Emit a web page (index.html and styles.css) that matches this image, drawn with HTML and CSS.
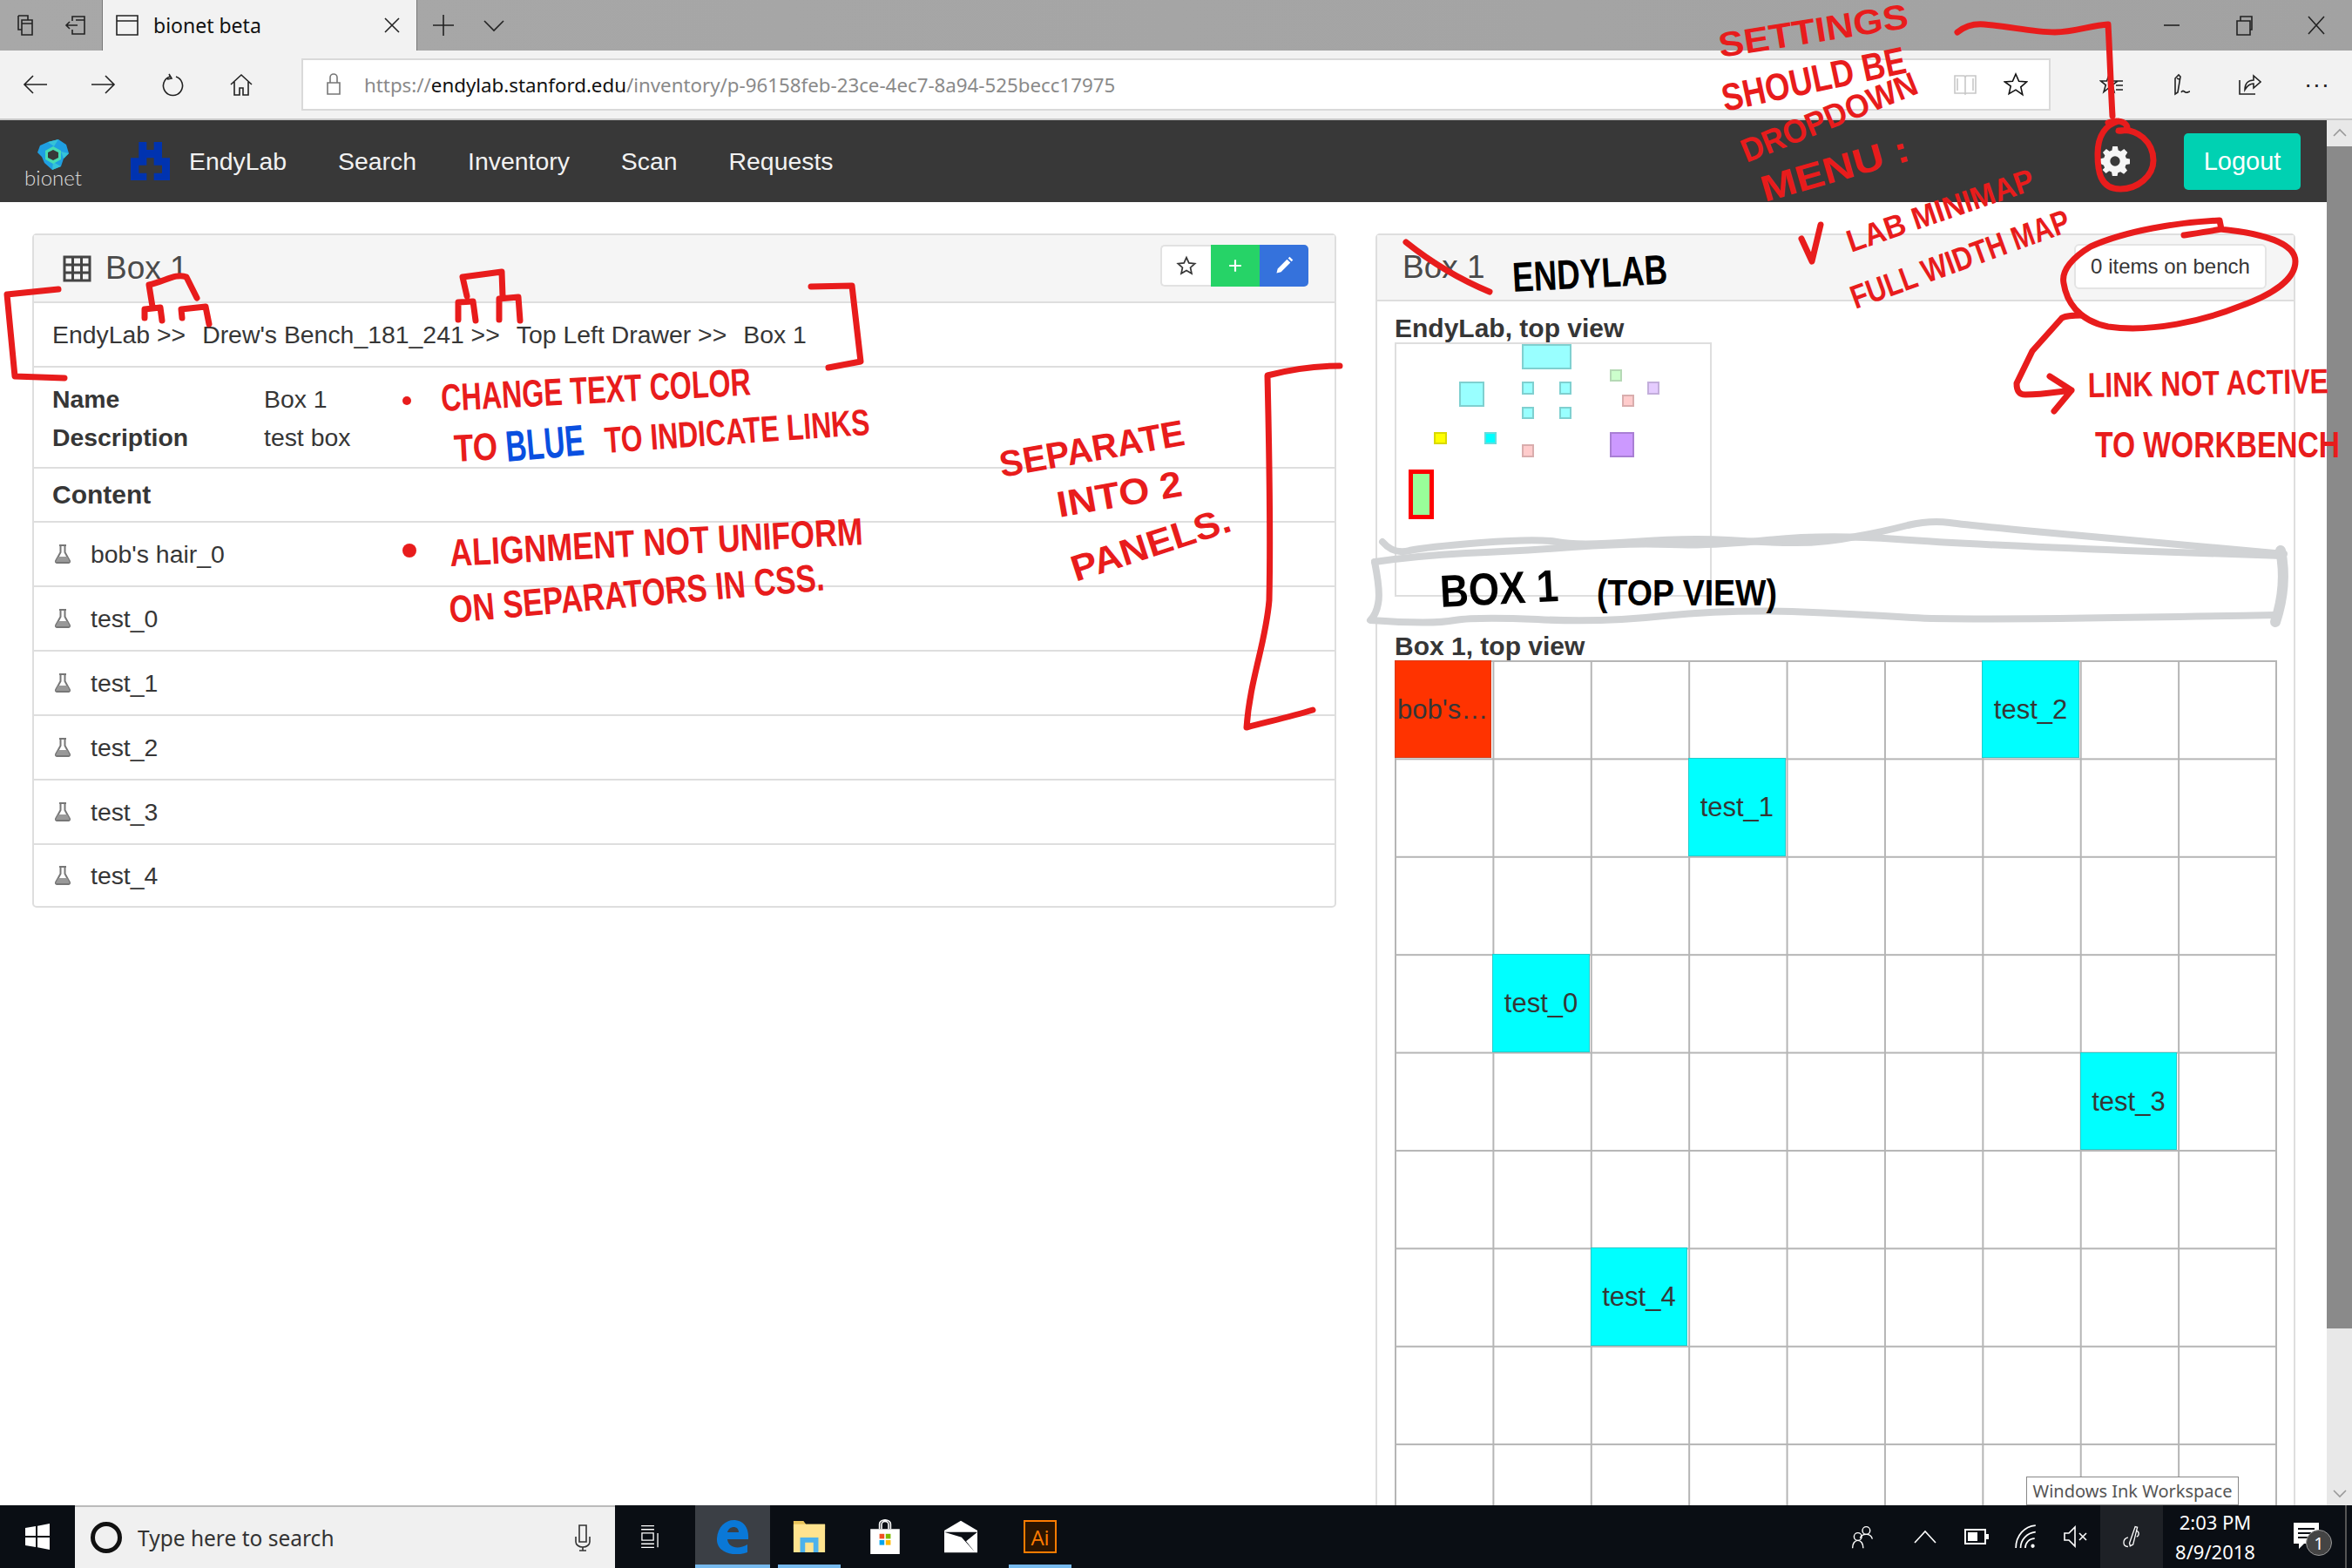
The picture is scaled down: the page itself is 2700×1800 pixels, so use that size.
FILE: index.html
```html
<!DOCTYPE html>
<html lang="en">
<head>
  <meta charset="UTF-8" />
  <title>bionet beta</title>
  <link rel="stylesheet" href="styles.css">
</head>
<body>
<div class="screen">

  <!-- browser tabs -->
  <div class="tabbar">
    <div class="chrome-btn">
      <svg class="ico" viewBox="0 0 28 28"><path d="M6 3h11v5M6 3v16h4M10 8h12v17H10zM10 12h12"/></svg>
    </div>
    <div class="chrome-btn">
      <svg class="ico" viewBox="0 0 28 28"><path d="M10 9V4h14v20H10v-5M3 14h13M7 10l-4 4 4 4M14 8h10"/></svg>
    </div>
    <div class="tab">
      <svg class="ico" viewBox="0 0 28 28"><path d="M2 3h24v22H2zM2 9h24"/></svg>
      <span class="tab-title">bionet beta</span>
      <svg class="ico ico-small" viewBox="0 0 20 20"><path d="M2 2l16 16M18 2L2 18"/></svg>
    </div>
    <div class="tab-plus">
      <svg class="ico" viewBox="0 0 28 28"><path d="M14 2v24M2 14h24"/></svg>
    </div>
    <div class="tab-more">
      <svg class="ico" viewBox="0 0 28 28"><path d="M3 9l11 11L25 9"/></svg>
    </div>
    <div class="window-btns">
      <div class="window-btn"><svg class="ico" viewBox="0 0 28 28"><path d="M5 14h18"/></svg></div>
      <div class="window-btn"><svg class="ico" viewBox="0 0 28 28"><path d="M6 9h15v16H6zM10 9V4h13v15h-2"/></svg></div>
      <div class="window-btn"><svg class="ico" viewBox="0 0 28 28"><path d="M5 4l18 20M23 4L5 24"/></svg></div>
    </div>
  </div>

  <!-- address bar -->
  <div class="toolbar">
    <div class="tool-btn"><svg class="ico" viewBox="0 0 28 28"><path d="M28 14H2M12 4L2 14l10 10"/></svg></div>
    <div class="tool-btn"><svg class="ico" viewBox="0 0 28 28"><path d="M0 14h26M16 4l10 10-10 10"/></svg></div>
    <div class="tool-btn"><svg class="ico" viewBox="0 0 28 28"><path d="M10 2l3 5-5 1M11 5a11 11 0 1 0 7 0"/></svg></div>
    <div class="tool-btn"><svg class="ico" viewBox="0 0 28 28"><path d="M2 14L14 3l12 11M6 11v15h6v-8h4v8h6V11"/></svg></div>
    <div class="address">
      <svg class="ico lock" viewBox="0 0 24 28"><path d="M5 12h14v13H5zM8 12V6a4 4 0 0 1 8 0v6"/></svg>
      <span class="url">https://<b>endylab.stanford.edu</b>/inventory/p-96158feb-23ce-4ec7-8a94-525becc17975</span>
      <div class="address-end">
        <svg class="ico book" viewBox="0 0 28 28"><path d="M2 4h11l1 2 1-2h11v20H15l-1 1-1-1H2zM14 6v18M5 7v14M23 7v14"/></svg>
        <svg class="ico star" viewBox="0 0 28 28"><path d="M14 2l3.6 8.2 8.9.8-6.7 5.9 2 8.7L14 20.1 6.200 24.600l2-8.700L1.500 11l8.900-.8z"/></svg>
      </div>
    </div>
    <div class="tool-group">
      <div class="tool-btn"><svg class="ico" viewBox="0 0 28 28"><path d="M11 3l2.500 7H21l-6 4.500 2 8-6-4.800L5 22.500l2.300-8L1.500 10H8.500zM17 10h10M19 15h8M19 20h8"/></svg></div>
      <div class="tool-btn"><svg class="ico" viewBox="0 0 28 28"><path d="M8 22V7l4-4 2 2-3 18-3 2zM10 7l3 1M15 23c2-3 3-1 5 0s3-1 5-1"/></svg></div>
      <div class="tool-btn"><svg class="ico" viewBox="0 0 28 28"><path d="M3 9v16h18M9 20c0-7 4-11 10-11V4l8 7-8 7v-5c-4 0-7 2-10 7z"/></svg></div>
      <div class="tool-btn"><span class="dots">...</span></div>
    </div>
  </div>

  <div class="viewport">
    <main class="page">

      <nav class="navbar">
        <div class="brand">
          <svg class="brand-mark" viewBox="0 0 36 36">
            <path fill="#1f9fe2" d="M12 3l12-3 9 6 3 10-6 6-3 9-10 4-9-8-3-7-5-5 3-8z"/>
            <path fill="#35c3d8" d="M12 3l12-3-5 8zM27 31l-10 4 1-9zM30 22l6-6-9-2z"/>
            <path fill="#46dcb4" d="M18 8l9 5v10l-9 5-9-5V13z"/>
            <path fill="#383838" d="M18 12l6 3v6l-6 3-6-3v-6z"/>
          </svg>
          <span class="brand-name">bionet</span>
        </div>
        <svg class="lab-mark" viewBox="450 100 135 132"><path fill="#0033b0" d="M478 100h27v27h25v-27h28v55h27v77h-55v-25h28v-27h-28v-25h-25v25h-27v27h27v25h-55v-77h28z"/></svg>
        <a class="nav-link nav-first">EndyLab</a>
        <a class="nav-link">Search</a>
        <a class="nav-link">Inventory</a>
        <a class="nav-link">Scan</a>
        <a class="nav-link">Requests</a>
        <svg class="gear" viewBox="0 0 24 24"><path fill-rule="evenodd" d="M10 0h4l.6 3.200 2 .8L19.300 2.200l2.800 2.800-1.800 2.700.8 2 3 .6v4l-3.200.6-.8 2 1.800 2.700-2.800 2.800-2.700-1.800-2 .8L13.800 24h-4l-.6-3.200-2-.8-2.600 1.800-2.800-2.800L3.600 17.300l-.8-2L0 14v-4l3-.6.800-2L2.100 4.900l2.800-2.800L7.500 4l2-.8zM12 8a4 4 0 1 0 0 8 4 4 0 0 0 0-8z"/></svg>
        <a class="logout">Logout</a>
      </nav>

      <div class="columns">
        <section class="panel panel-left">
          <div class="panel-head">
            <svg class="table-ico" viewBox="0 0 33 31"><path d="M2 2h29v27H2zM2 11h29M2 20h29M11.500 2v27M21.500 2v27"/></svg>
            <span class="panel-title">Box 1</span>
            <div class="btn-group">
              <div class="btn btn-star"><svg viewBox="0 0 28 28"><path d="M14 3l3.300 7.400 8 .8-6 5.400 1.700 7.900-7-4-7 4 1.700-7.900-6-5.400 8-.8z"/></svg></div>
              <div class="btn btn-add"><svg viewBox="0 0 28 28"><path d="M14 6v16M6 14h16"/></svg></div>
              <div class="btn btn-edit"><svg viewBox="0 0 28 28"><path d="M4 24l1.500-6L18 5.500l4.500 4.500L10 22.500zM19.500 4l2-2 4.500 4.500-2 2z"/></svg></div>
            </div>
          </div>
          <div class="crumbs">
            <span>EndyLab &gt;&gt;</span>
            <span>Drew's Bench_181_241 &gt;&gt;</span>
            <span>Top Left Drawer &gt;&gt;</span>
            <span>Box 1</span>
          </div>
          <div class="props">
            <div class="prop"><strong>Name</strong><span>Box 1</span></div>
            <div class="prop"><strong>Description</strong><span>test box</span></div>
          </div>
          <h5 class="content-head">Content</h5>
          <div class="item"><svg class="flask" viewBox="0 0 20 24"><path d="M6 2h8M7.500 2v8L2 20a1.500 1.500 0 0 0 1.500 2h13a1.500 1.500 0 0 0 1.500-2l-5.500-10V2"/><path class="flask-fill" d="M5 15h10l3 6H2z"/></svg>bob's hair_0</div>
          <div class="item"><svg class="flask" viewBox="0 0 20 24"><path d="M6 2h8M7.500 2v8L2 20a1.500 1.500 0 0 0 1.500 2h13a1.500 1.500 0 0 0 1.500-2l-5.500-10V2"/><path class="flask-fill" d="M5 15h10l3 6H2z"/></svg>test_0</div>
          <div class="item"><svg class="flask" viewBox="0 0 20 24"><path d="M6 2h8M7.500 2v8L2 20a1.500 1.500 0 0 0 1.500 2h13a1.500 1.500 0 0 0 1.500-2l-5.500-10V2"/><path class="flask-fill" d="M5 15h10l3 6H2z"/></svg>test_1</div>
          <div class="item"><svg class="flask" viewBox="0 0 20 24"><path d="M6 2h8M7.500 2v8L2 20a1.500 1.500 0 0 0 1.500 2h13a1.500 1.500 0 0 0 1.500-2l-5.500-10V2"/><path class="flask-fill" d="M5 15h10l3 6H2z"/></svg>test_2</div>
          <div class="item"><svg class="flask" viewBox="0 0 20 24"><path d="M6 2h8M7.500 2v8L2 20a1.500 1.500 0 0 0 1.500 2h13a1.500 1.500 0 0 0 1.500-2l-5.500-10V2"/><path class="flask-fill" d="M5 15h10l3 6H2z"/></svg>test_3</div>
          <div class="item"><svg class="flask" viewBox="0 0 20 24"><path d="M6 2h8M7.500 2v8L2 20a1.500 1.500 0 0 0 1.500 2h13a1.500 1.500 0 0 0 1.500-2l-5.500-10V2"/><path class="flask-fill" d="M5 15h10l3 6H2z"/></svg>test_4</div>
        </section>

        <section class="panel panel-right">
          <div class="panel-head">
            <span class="panel-title">Box 1</span>
            <div class="bench-btn">0 items on bench</div>
          </div>
          <div class="panel-body">
            <h5 class="map-title">EndyLab, top view</h5>
            <div class="minimap">
              <div class="node node-cyan n1"></div>
              <div class="node node-cyan n2"></div>
              <div class="node node-cyan n3"></div>
              <div class="node node-cyan n4"></div>
              <div class="node node-cyan n5"></div>
              <div class="node node-cyan n6"></div>
              <div class="node node-green n7"></div>
              <div class="node node-lilac n8"></div>
              <div class="node node-pink n9"></div>
              <div class="node node-yellow n10"></div>
              <div class="node node-aqua n11"></div>
              <div class="node node-pink n12"></div>
              <div class="node node-purple n13"></div>
              <div class="node node-active n14"></div>
            </div>
            <h5 class="map-title box-title">Box 1, top view</h5>
            <div class="boxgrid">
              <div class="slot slot-red c1 r1">bob's hair_0</div>
              <div class="slot c7 r1">test_2</div>
              <div class="slot c4 r2">test_1</div>
              <div class="slot c2 r4">test_0</div>
              <div class="slot c8 r5">test_3</div>
              <div class="slot c3 r7">test_4</div>
            </div>
          </div>
        </section>
      </div>
    </main>

    <div class="scrollbar">
      <div class="scroll-arrow"><svg class="ico" viewBox="0 0 20 20"><path d="M3 13l7-7 7 7"/></svg></div>
      <div class="scroll-thumb"></div>
      <div class="scroll-track"><svg class="ico" viewBox="0 0 20 20"><path d="M3 7l7 7 7-7"/></svg></div>
    </div>
  </div>

  <!-- windows taskbar -->
  <footer class="taskbar">
    <div class="win-start">
      <svg viewBox="0 0 30 30"><path fill="#fff" d="M1 5l12-2v11H1zM15 2.700L29 0v14H15zM1 16h12v11L1 25zM15 16h14v14l-14-2.700z"/></svg>
    </div>
    <div class="search">
      <span class="cortana"></span>
      <span class="search-text">Type here to search</span>
      <svg class="ico mic" viewBox="0 0 20 32"><path d="M6 2h8v19H6zM2 15v6a8 6 0 0 0 16 0v-6M10 27v4M6 31h8"/></svg>
    </div>
    <div class="task-view">
      <svg class="ico ico-white" viewBox="0 0 30 34"><path d="M3 2h18M3 7h18M4 12h16v10H4zM3 27h18M3 32h18M26 6v0M26 12v20"/></svg>
    </div>
    <div class="task-app task-edge">
      <svg viewBox="0 0 38 40"><path fill="#0a78d7" fill-rule="evenodd" d="M1 22C2 8 12 0 22 1c10 1 16 9 15 22H13c1 10 13 12 23 6v9C20 44 0 38 1 22zM13 15h13C26 7 15 7 13 15z"/></svg>
    </div>
    <div class="task-app task-open">
      <svg viewBox="0 0 38 42"><path fill="#e8c35a" d="M0 2h12l3 4h23v6H0z"/><path fill="#ffe38f" d="M0 6h38v34H0z"/><path fill="#4db2ec" d="M8 22h22v18h-6V28H14v12H8z"/></svg>
    </div>
    <div class="task-app">
      <svg viewBox="0 0 42 50"><path fill="none" stroke="#fff" stroke-width="2" d="M13 14V7a8 6 0 0 1 16 0v7M16 14V8a5 5 0 0 1 10 0v6"/><path fill="#fff" d="M0 14h42v36H0z"/><path fill="#f25022" d="M13 21h7v7h-7z"/><path fill="#7fba00" d="M22 21h7v7h-7z"/><path fill="#00a4ef" d="M13 30h7v7h-7z"/><path fill="#ffb900" d="M22 30h7v7h-7z"/></svg>
    </div>
    <div class="task-app">
      <svg viewBox="0 0 44 42"><path fill="#fff" d="M22 0l22 13v29H0V13z"/><path fill="#0a0e14" d="M0 15h44L29 27l12 15-18-20z"/></svg>
    </div>
    <div class="task-app task-open task-ai"><span class="ai-badge">Ai</span></div>

    <div class="tray">
      <div class="tray-item tray-people"><svg class="ico ico-white" viewBox="0 0 30 32"><circle cx="20" cy="8" r="5"/><path d="M12 18c1-4 4-5 8-5s7 2 8 6"/><circle cx="9" cy="16" r="5"/><path d="M2 31c0-6 3-10 7-10s7 4 7 10"/></svg></div>
      <div class="tray-item tray-caret"><svg class="ico ico-white" viewBox="0 0 28 18"><path d="M2 16L14 3l12 13"/></svg></div>
      <div class="tray-item tray-battery"><svg viewBox="0 0 28 18"><path fill="none" stroke="#fff" stroke-width="2" d="M1 1h23v16H1z"/><path fill="#fff" d="M4 4h11v10H4zM25 6h3v6h-3z"/></svg></div>
      <div class="tray-item tray-wifi"><svg class="ico ico-white" viewBox="0 0 24 26"><path d="M1 25C1 12 10 2 22 1M6 25c0-9 7-16 16-17M11 25c0-5 4-10 10-10"/><circle class="dot" cx="19" cy="23" r="2"/></svg></div>
      <div class="tray-item tray-volume"><svg class="ico ico-white" viewBox="0 0 28 26"><path d="M1 9h5l7-7v22l-7-7H1zM18 9l8 8M26 9l-8 8"/></svg></div>
      <div class="tray-item tray-ink"><svg class="ico ico-white" viewBox="0 0 30 34"><path d="M12 26L20 3l3 1-6 24-4 2zM21 9c5 0 5 7 1 8M10 18c-8 2-8 13 0 13"/></svg></div>
      <div class="clock"><span>2:03 PM</span><span>8/9/2018</span></div>
      <div class="tray-item tray-notify">
        <svg viewBox="0 0 30 32"><path fill="#fff" fill-rule="evenodd" d="M0 0h29v24H12l-6 6v-6H0zM5 6h19v2H5zM5 11h19v2H5zM5 16h19v2H5z"/></svg>
        <span class="notify-badge">1</span>
      </div>
      <div class="show-desktop"></div>
    </div>
  </footer>

  <div class="tooltip">Windows Ink Workspace</div>

  <!-- pen annotations drawn over the screenshot -->
  <svg class="ink" viewBox="0 0 2700 1800">
    <g class="scribble">
      <path d="M1587 622Q1600 637 1618 632Q1636 628 1700 623Q1765 618 1787 622Q1810 627 1875 622Q1939 617 1984 620Q2029 623 2062 623Q2096 623 2130 616Q2163 610 2190 603Q2216 597 2238 600Q2260 603 2335 610Q2410 617 2522 627L2622 636"/>
      <path d="M1578 645Q1627 638 1683 635Q1739 633 1805 628Q1872 623 1917 625Q1962 627 2029 620Q2096 613 2178 619Q2260 625 2440 632L2620 638"/>
      <path d="M1578 645Q1585 680 1582 693Q1580 705 1573 712Q1645 717 1670 712Q1694 708 1765 711Q1837 715 1910 707Q1984 700 2057 702Q2131 705 2195 709Q2260 713 2612 706"/>
      <path class="scribble-end" d="M2618 632q8 40-6 82"/>
    </g>
    <g class="pen pen-red">
      <path d="M67 332L8 338 17 432 74 434"/>
      <path d="M931 329l47-1 10 87-37 7"/>
      <path d="M175 352l-4-25c18-4 32-14 43-9l12 24M186 368l-2-15-18 2v10M209 365l-1-10 28-3 4 20"/>
      <path d="M536 340l-5-22 45-6 1 28M546 368l-3-22-17 1v20M573 367v-24l22-2 2 27"/>
      <path d="M1538 420c-30 0-60 5-83 11 2 90 4 170 2 258-4 50-22 90-26 146 22-6 50-12 76-20"/>
      <path d="M2247 37c10-8 20-10 31-9 28 2 55 9 81 9 22 0 42-8 61-9 2 35 3 70 5 105"/>
      <path d="M2420 141c10-4 20-2 22 5 1 3-6 5-10 4 22-4 40 14 40 34 0 18-18 33-38 33-24 0-26-22-26-40 0-22 10-34 24-38"/>
      <path d="M2507 270C2520 268 2540 265 2550 263L2548 253C2500 255 2440 265 2400 283C2380 295 2366 310 2369 325C2372 345 2385 368 2420 375C2470 382 2530 368 2570 352C2610 338 2635 320 2635 300C2635 280 2600 268 2548 263"/>
      <path d="M2390 362c-10 0-18 0-23 3l-34 38-18 37c0 10 4 13 10 13 18 0 36-3 53-5M2353 432l25 16-20 24"/>
      <path d="M2068 274l12 26 10-42"/>
      <path d="M1614 278c30 24 60 42 96 57"/>
      <circle class="dot" cx="467" cy="460" r="5"/>
      <circle class="dot" cx="470" cy="632" r="8"/>
    </g>
    <g class="hand hand-red">
      <text transform="translate(1975 66) rotate(-9)" font-size="40" textLength="220" lengthAdjust="spacingAndGlyphs">SETTINGS</text>
      <text transform="translate(1980 128) rotate(-12)" font-size="44" textLength="215" lengthAdjust="spacingAndGlyphs">SHOULD BE</text>
      <text transform="translate(2005 187) rotate(-22)" font-size="38" textLength="215" lengthAdjust="spacingAndGlyphs">DROPDOWN</text>
      <text transform="translate(2026 232) rotate(-16)" font-size="42" textLength="175" lengthAdjust="spacingAndGlyphs">MENU :</text>
      <text transform="translate(2125 290) rotate(-19)" font-size="36" textLength="225" lengthAdjust="spacingAndGlyphs">LAB MINIMAP</text>
      <text transform="translate(2130 355) rotate(-20)" font-size="38" textLength="265" lengthAdjust="spacingAndGlyphs">FULL WIDTH MAP</text>
      <text transform="translate(2397 456) rotate(-1) scale(.8 1)" font-size="40">LINK NOT ACTIVE</text>
      <text transform="translate(2405 525) scale(.8 1)" font-size="42">TO WORKBENCH</text>
      <text transform="translate(507 472) rotate(-3)" font-size="44" textLength="356" lengthAdjust="spacingAndGlyphs">CHANGE TEXT COLOR</text>
      <text transform="translate(522 530) rotate(-3)" font-size="44" textLength="50" lengthAdjust="spacingAndGlyphs">TO</text>
      <text class="hand-blue" transform="translate(582 530) rotate(-5)" font-size="50" textLength="90" lengthAdjust="spacingAndGlyphs">BLUE</text>
      <text transform="translate(695 520) rotate(-4)" font-size="42" textLength="305" lengthAdjust="spacingAndGlyphs">TO INDICATE LINKS</text>
      <text transform="translate(517 650) rotate(-3)" font-size="44" textLength="475" lengthAdjust="spacingAndGlyphs">ALIGNMENT NOT UNIFORM</text>
      <text transform="translate(517 715) rotate(-5)" font-size="44" textLength="432" lengthAdjust="spacingAndGlyphs">ON SEPARATORS IN CSS.</text>
      <text transform="translate(1150 548) rotate(-10)" font-size="42" textLength="215" lengthAdjust="spacingAndGlyphs">SEPARATE</text>
      <text transform="translate(1216 594) rotate(-10)" font-size="42" textLength="145" lengthAdjust="spacingAndGlyphs">INTO 2</text>
      <text transform="translate(1235 668) rotate(-18)" font-size="42" textLength="190" lengthAdjust="spacingAndGlyphs">PANELS.</text>
    </g>
    <g class="hand hand-black">
      <text transform="translate(1737 335) rotate(-3)" font-size="48" textLength="178" lengthAdjust="spacingAndGlyphs">ENDYLAB</text>
      <text transform="translate(1654 697) rotate(-3)" font-size="52" textLength="136" lengthAdjust="spacingAndGlyphs">BOX 1</text>
      <text transform="translate(1833 695)" font-size="42" textLength="207" lengthAdjust="spacingAndGlyphs">(TOP VIEW)</text>
    </g>
  </svg>
</div>
</body>
</html>
```

FILE: styles.css
```css
:root {
  --text: #363636;
  --line: #dedede;
  --head-bg: #f5f5f5;
  --chrome: #f2f2f2;
  --red-ink: #e81c1c;
}

* {
  box-sizing: border-box;
}

html, body {
  margin: 0;
  height: 100%;
  overflow: hidden;
}

body {
  font-family: "Liberation Sans", Arial, sans-serif;
  color: var(--text);
  background: #fff;
}

h5 {
  margin: 0;
}

.screen {
  position: relative;
  width: 2700px;
  height: 1800px;
  display: flex;
  flex-direction: column;
  overflow: hidden;
}

.ico {
  width: 28px;
  height: 28px;
  fill: none;
  stroke: #222;
  stroke-width: 1.6;
}

.ico-small {
  width: 20px;
  height: 20px;
}

.ico-white {
  stroke: #fff;
}

/* tabs */
.tabbar {
  height: 58px;
  display: flex;
  background: linear-gradient(90deg, #a8a8a8, #a2a2a2);
  font-family: "Noto Sans", sans-serif;
}

.chrome-btn {
  width: 58px;
  display: flex;
  align-items: center;
  justify-content: center;
}

.tab {
  width: 362px;
  margin-left: 1px;
  display: flex;
  align-items: center;
  padding: 0 18px 0 14px;
  background: var(--chrome);
  border-left: 1px solid #777;
  border-right: 1px solid #777;
}

.tab-title {
  flex: 1;
  margin-left: 16px;
  font-size: 23px;
  color: #111;
}

.tab-plus {
  width: 60px;
  display: flex;
  align-items: center;
  justify-content: center;
}

.tab-more {
  width: 56px;
  display: flex;
  align-items: center;
  justify-content: center;
}

.window-btns {
  margin-left: auto;
  display: flex;
}

.window-btn {
  width: 83px;
  display: flex;
  align-items: center;
  justify-content: center;
}

/* address bar */
.toolbar {
  height: 80px;
  display: flex;
  align-items: center;
  background: var(--chrome);
  border-bottom: 2px solid #c9c9c9;
}

.tool-btn {
  width: 79px;
  display: flex;
  align-items: center;
  justify-content: center;
}

.tool-group {
  margin-left: 30px;
  display: flex;
}

.dots {
  font-size: 28px;
  line-height: 28px;
  letter-spacing: 2px;
  padding-bottom: 12px;
  color: #222;
}

.address {
  width: 2008px;
  height: 60px;
  margin-left: 30px;
  display: flex;
  align-items: center;
  padding-left: 21px;
  background: #fff;
  border: 2px solid #d9d9d9;
}

.lock {
  stroke: #777;
}

.url {
  margin-left: 21px;
  font-family: "Noto Sans", sans-serif;
  font-size: 22.300px;
  color: #8a8a8a;
  white-space: nowrap;
}

.url b {
  font-weight: 400;
  color: #111;
}

.address-end {
  margin-left: auto;
  display: flex;
  align-items: center;
  gap: 30px;
  padding-right: 24px;
}

.book {
  stroke: #c8c8c8;
}

.star {
  stroke: #111;
}

/* page */
.viewport {
  flex: 1;
  min-height: 0;
  display: flex;
}

.page {
  flex: 1;
  min-width: 0;
  overflow: hidden;
  background: #fff;
}

.navbar {
  height: 94px;
  display: flex;
  align-items: center;
  padding-right: 30px;
  background: #383838;
}

.brand {
  width: 122px;
  align-self: flex-start;
  margin-top: 22px;
  display: flex;
  flex-direction: column;
  align-items: center;
}

.brand-mark {
  width: 36px;
  height: 36px;
}

.brand-name {
  margin-top: -4px;
  font-family: Lato, sans-serif;
  font-weight: 300;
  font-size: 24px;
  line-height: 24px;
  color: #ddd;
}

.lab-mark {
  width: 45px;
  height: 44px;
  margin-left: 28px;
}

.nav-link {
  margin-left: 59px;
  font-size: 28.400px;
  color: #f2f2f2;
}

.nav-first {
  margin-left: 22px;
}

.gear {
  width: 34px;
  height: 34px;
  margin-left: auto;
  fill: #f5f5f5;
}

.logout {
  width: 134px;
  height: 65px;
  margin-left: 62px;
  display: flex;
  align-items: center;
  justify-content: center;
  font-size: 29px;
  color: #fff;
  background: #00d1b2;
  border-radius: 5px;
}

.columns {
  display: flex;
  gap: 45px;
  padding: 36px 36px 0 37px;
  align-items: flex-start;
}

.panel {
  border: 2px solid var(--line);
  border-radius: 5px;
}

.panel-left {
  width: 1497px;
}

.panel-right {
  width: 1056px;
  height: 1500px;
}

.panel-head {
  height: 78px;
  display: flex;
  align-items: center;
  padding: 0 19px 0 33px;
  background: var(--head-bg);
  border-bottom: 2px solid var(--line);
}

.table-ico {
  width: 33px;
  height: 31px;
  margin-right: 16px;
  fill: none;
  stroke: #444;
  stroke-width: 3;
}

.panel-title {
  font-size: 37px;
  color: #4a4a4a;
}

.btn-group {
  margin-left: auto;
  margin-top: -6px;
  margin-right: 11px;
  display: flex;
}

.btn {
  width: 56px;
  height: 48px;
  display: flex;
  align-items: center;
  justify-content: center;
}

.btn svg {
  width: 24px;
  height: 24px;
  fill: none;
  stroke: #fff;
  stroke-width: 2.500;
}

.btn-star {
  width: 58px;
  background: #fff;
  border: 2px solid #e2e2e2;
  border-right: 0;
  border-radius: 5px 0 0 5px;
}

.btn-star svg {
  stroke: #363636;
  stroke-width: 2;
}

.btn-add {
  background: #26d367;
}

.btn-edit {
  background: #3572dc;
  border-radius: 0 5px 5px 0;
}

.btn-edit svg {
  fill: #fff;
  stroke: none;
}

.crumbs {
  height: 74px;
  display: flex;
  align-items: center;
  gap: 19px;
  padding-left: 21px;
  font-size: 28.400px;
  border-bottom: 2px solid var(--line);
}

.props {
  height: 116px;
  padding: 14px 21px;
  font-size: 28.400px;
  line-height: 44px;
  border-bottom: 2px solid var(--line);
}

.prop {
  display: flex;
}

.prop strong {
  width: 243px;
}

.content-head {
  height: 62px;
  padding-left: 21px;
  font-size: 30px;
  line-height: 60px;
  border-bottom: 2px solid var(--line);
}

.item {
  height: 74px;
  display: flex;
  align-items: center;
  padding-left: 23px;
  font-size: 28.400px;
  border-bottom: 2px solid var(--line);
}

.item:last-child {
  height: 70px;
  border-bottom: 0;
}

.flask {
  width: 20px;
  height: 24px;
  margin-right: 22px;
  fill: none;
  stroke: #777;
  stroke-width: 2;
}

.flask-fill {
  fill: #999;
  stroke: none;
}

.bench-btn {
  width: 221px;
  height: 52px;
  margin-left: auto;
  margin-right: 12px;
  margin-top: -2px;
  display: flex;
  align-items: center;
  justify-content: center;
  font-size: 24px;
  background: #fff;
  border: 2px solid #e4e4e4;
  border-radius: 6px;
}

.panel-right .panel-head {
  height: 76px;
  padding-left: 29px;
}

.panel-body {
  padding: 15px 21px 0 20px;
}

.map-title {
  font-size: 30px;
  line-height: 32px;
}

.box-title {
  margin-top: 41px;
}

/* lab minimap, 25 x 20 units */
.minimap {
  width: 364px;
  height: 292px;
  display: grid;
  grid-template-columns: repeat(25, 14.400px);
  grid-template-rows: repeat(20, 14.400px);
  border: 2px solid var(--line);
}

.node {
  border: 2px solid;
}

.node-cyan { background: #99ffff; border-color: #7fd0d0; }
.node-green { background: #ccffcc; border-color: #b5d9b5; }
.node-lilac { background: #e5ccff; border-color: #c3aedb; }
.node-pink { background: #ffcccc; border-color: #d9adad; }
.node-yellow { background: #ffff00; border-color: #d9d900; }
.node-aqua { background: #00ffff; border-color: #66dddd; }
.node-purple { background: #cc99ff; border-color: #a97fd4; }
.node-active { background: #99ff99; border: 5px solid #ff0000; }

.n1 { grid-column: 11 / span 4; grid-row: 1 / span 2; }
.n2 { grid-column: 6 / span 2; grid-row: 4 / span 2; }
.n3 { grid-column: 11; grid-row: 4; }
.n4 { grid-column: 14; grid-row: 4; }
.n5 { grid-column: 11; grid-row: 6; }
.n6 { grid-column: 14; grid-row: 6; }
.n7 { grid-column: 18; grid-row: 3; }
.n8 { grid-column: 21; grid-row: 4; }
.n9 { grid-column: 19; grid-row: 5; }
.n10 { grid-column: 4; grid-row: 8; }
.n11 { grid-column: 8; grid-row: 8; }
.n12 { grid-column: 11; grid-row: 9; }
.n13 { grid-column: 18 / span 2; grid-row: 8 / span 2; }
.n14 { grid-column: 2 / span 2; grid-row: 11 / span 4; }

/* box contents, 9 x 9 slots */
.boxgrid {
  width: 1013px;
  height: 1012px;
  display: grid;
  grid-template-columns: repeat(9, 112.400px);
  grid-template-rows: repeat(9, 112.400px);
  background-image:
    linear-gradient(#b5b5b5 2px, transparent 2px),
    linear-gradient(90deg, #b5b5b5 2px, transparent 2px);
  background-size: 112.400px 112.400px;
  border-right: 2px solid #b5b5b5;
}

.slot {
  margin-right: 1px;
  padding: 0 4px;
  line-height: 112px;
  font-size: 31px;
  text-align: center;
  white-space: nowrap;
  overflow: hidden;
  text-overflow: ellipsis;
  background: #00ffff;
  border: 1px solid #22cccc;
}

.slot-red {
  padding: 0 2px;
  background: #ff3300;
  border-color: #d93a10;
}

.c1 { grid-column: 1; }
.c2 { grid-column: 2; }
.c3 { grid-column: 3; }
.c4 { grid-column: 4; }
.c7 { grid-column: 7; }
.c8 { grid-column: 8; }
.r1 { grid-row: 1; }
.r2 { grid-row: 2; }
.r4 { grid-row: 4; }
.r5 { grid-row: 5; }
.r7 { grid-row: 7; }

.scrollbar {
  width: 29px;
  display: flex;
  flex-direction: column;
  background: #e8e8e8;
}

.scroll-arrow {
  height: 30px;
  display: flex;
  align-items: center;
  justify-content: center;
}

.scroll-arrow .ico, .scroll-track .ico {
  width: 20px;
  height: 20px;
  stroke: #999;
}

.scroll-thumb {
  height: 1357px;
  background: #8a8a8a;
}

.scroll-track {
  flex: 1;
  display: flex;
  align-items: flex-end;
  justify-content: center;
  padding-bottom: 4px;
}

/* taskbar */
.taskbar {
  height: 72px;
  display: flex;
  align-items: center;
  background: #0a0e14;
  font-family: "Noto Sans", sans-serif;
}

.win-start {
  width: 86px;
  display: flex;
  justify-content: center;
}

.win-start svg {
  width: 30px;
  height: 30px;
}

.search {
  width: 620px;
  height: 72px;
  display: flex;
  align-items: center;
  padding-left: 18px;
  background: #f0f0f0;
  border-top: 2px solid #bbb;
}

.cortana {
  width: 36px;
  height: 36px;
  border: 5px solid #111;
  border-radius: 50%;
}

.search-text {
  margin-left: 18px;
  font-size: 24.500px;
  color: #333;
}

.mic {
  width: 20px;
  height: 32px;
  margin-left: auto;
  margin-right: 27px;
  stroke: #333;
}

.task-view {
  width: 80px;
  display: flex;
  justify-content: center;
}

.task-app {
  position: relative;
  width: 72px;
  height: 72px;
  margin-left: 15px;
  display: flex;
  align-items: center;
  justify-content: center;
}

.task-app svg {
  width: 38px;
  height: 40px;
}

.task-edge {
  width: 86px;
  margin-left: 12px;
  margin-right: -6px;
  background: #3b3f45;
}

.task-edge::after, .task-open::after {
  content: "";
  position: absolute;
  left: 0;
  right: 0;
  bottom: 0;
  height: 4px;
  background: #76b9ed;
}

.task-ai {
  margin-left: 19px;
}

.ai-badge {
  width: 38px;
  height: 38px;
  display: flex;
  align-items: center;
  justify-content: center;
  font-family: "Open Sans", sans-serif;
  font-size: 24px;
  color: #ff7c00;
  background: #2b1400;
  border: 2px solid #ff7c00;
}

.tray {
  margin-left: auto;
  height: 72px;
  display: flex;
  align-items: center;
}

.tray-item {
  height: 72px;
  display: flex;
  align-items: center;
  justify-content: center;
}

.tray-item svg {
  width: 28px;
  height: 28px;
}

.dot {
  fill: currentColor;
  stroke: none;
}

.tray-wifi .dot {
  fill: #fff;
}

.tray-people { width: 60px; }
.tray-caret { width: 60px; margin-left: 12px; }
.tray-battery { width: 57px; }
.tray-wifi { width: 58px; }
.tray-volume { width: 56px; }

.tray-ink {
  width: 72px;
  background: #1e2126;
}

.clock {
  width: 120px;
  display: flex;
  flex-direction: column;
  align-items: center;
  font-size: 22px;
  line-height: 34px;
  color: #fff;
}

.tray-notify {
  position: relative;
  width: 89px;
}

.tray-notify svg {
  width: 30px;
  height: 32px;
}

.notify-badge {
  position: absolute;
  left: 44px;
  top: 28px;
  width: 30px;
  height: 30px;
  display: flex;
  align-items: center;
  justify-content: center;
  font-size: 20px;
  color: #fff;
  background: #444;
  border: 1px solid #999;
  border-radius: 50%;
}

.show-desktop {
  width: 8px;
  height: 72px;
  border-left: 2px solid #555;
}

.tooltip {
  position: absolute;
  left: 2326px;
  top: 1695px;
  width: 244px;
  height: 33px;
  display: flex;
  align-items: center;
  justify-content: center;
  font-family: "Noto Sans", sans-serif;
  font-size: 20px;
  color: #555;
  background: #fff;
  border: 1px solid #888;
}

/* pen annotations */
.ink {
  position: absolute;
  left: 0;
  top: 0;
  width: 2700px;
  height: 1800px;
  pointer-events: none;
}

.scribble path {
  fill: none;
  stroke: #d1d3d5;
  stroke-width: 8;
  stroke-linecap: round;
  stroke-linejoin: round;
}

.scribble .scribble-end {
  stroke-width: 12;
}

.pen path {
  fill: none;
  stroke-linecap: round;
  stroke-linejoin: round;
  stroke-width: 7;
}

.pen-red {
  color: var(--red-ink);
}

.pen-red path {
  stroke: var(--red-ink);
}

.hand {
  font-family: "Liberation Sans Narrow", "Liberation Sans", sans-serif;
  font-weight: 700;
}

.hand-red {
  fill: var(--red-ink);
}

.hand-blue {
  fill: #0a4fe0;
}

.hand-black {
  fill: #000;
}
```
